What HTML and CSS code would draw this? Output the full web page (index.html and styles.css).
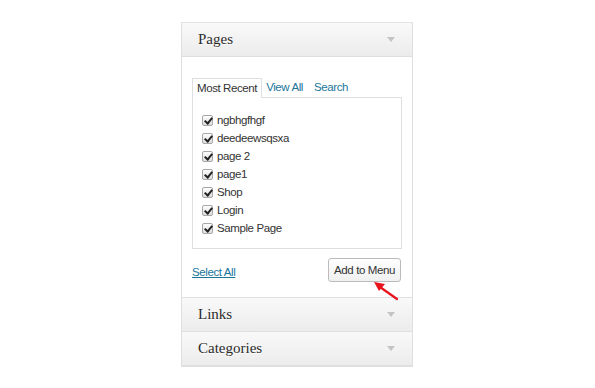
FILE: index.html
```html
<!DOCTYPE html>
<html lang="en">
<head>
    <meta charset="UTF-8">
    <title>Menu Pages</title>
    <link rel="stylesheet" href="styles.css">
</head>
<body>
    <div class="panel">
        <div class="section-head">
            <h3>Pages</h3>
            <span class="toggle"></span>
        </div>
        <div class="section-body">
            <ul class="tabs">
                <li class="tab active">Most Recent</li>
                <li class="tab">View All</li>
                <li class="tab">Search</li>
            </ul>
            <ul class="page-list">
                <li><span class="check"></span>ngbhgfhgf</li>
                <li><span class="check"></span>deedeewsqsxa</li>
                <li><span class="check"></span>page 2</li>
                <li><span class="check"></span>page1</li>
                <li><span class="check"></span>Shop</li>
                <li><span class="check"></span>Login</li>
                <li><span class="check"></span>Sample Page</li>
            </ul>
            <div class="actions">
                <a href="#" class="select-all">Select All</a>
                <button class="add-btn">Add to Menu</button>
                <!-- red pointer arrow -->
                <svg class="pointer" width="30" height="22" viewBox="0 0 30 22">
                    <line x1="25" y1="19" x2="8" y2="7" stroke="#e8141c" stroke-width="2.2" stroke-linecap="round"/>
                    <polygon points="2,2 13,4 7,11" fill="#e8141c"/>
                </svg>
            </div>
        </div>
        <div class="section-head">
            <h3>Links</h3>
            <span class="toggle"></span>
        </div>
        <div class="section-head">
            <h3>Categories</h3>
            <span class="toggle"></span>
        </div>
    </div>
</body>
</html>
```

FILE: styles.css
```css
body {
    margin: 0;
    background: #fff;
    font-family: "Liberation Sans", Arial, sans-serif;
    font-size: 11.5px;
    letter-spacing: -0.4px;
    color: #333;
}
.panel {
    width: 232px;
    margin: 22px 0 0 181px;
    border: 1px solid #dfdfdf;
    border-top: 1px solid #e4e4e4;
    box-sizing: border-box;
}
.section-head {
    height: 33px;
    display: flex;
    align-items: center;
    justify-content: space-between;
    padding: 0 17px 0 16px;
    background: linear-gradient(to bottom, #f9f9f9, #ececec);
    border-bottom: 1px solid #dfdfdf;
}
.section-head h3 {
    margin: 0;
    font-family: "Liberation Serif", "Times New Roman", serif;
    font-weight: normal;
    font-size: 15px;
    letter-spacing: 0;
    color: #2a2a2a;
    text-shadow: 0 1px 0 #fff;
}
.toggle {
    width: 0;
    height: 0;
    border-left: 4px solid transparent;
    border-right: 4px solid transparent;
    border-top: 5px solid #c4c4c4;
}
.section-body {
    background: #fff;
    padding: 21px 10px 15px 10px;
    border-bottom: 1px solid #dfdfdf;
}
.tabs {
    list-style: none;
    margin: 0;
    padding: 0;
    display: flex;
    height: 20px;
}
.tab {
    padding: 0 4px;
    line-height: 19px;
    color: #21759b;
}
.tab.active {
    color: #333;
    border: 1px solid #dfdfdf;
    border-bottom: none;
    background: #fff;
    position: relative;
    z-index: 1;
    height: 20px;
    box-sizing: border-box;
    padding: 0 4px;
}
.tab:nth-child(3) {
    margin-left: 3px;
}
.page-list {
    list-style: none;
    margin: -1px 0 0 0;
    padding: 13px 9px 11px 9px;
    border: 1px solid #dfdfdf;
}
.page-list li {
    display: flex;
    align-items: center;
    line-height: 18px;
    height: 18px;
}
.check {
    width: 9px;
    height: 9px;
    border: 1px solid #a8a8a8;
    border-radius: 2px;
    background: linear-gradient(to bottom, #fdfdfd, #dedede);
    margin-right: 4px;
    position: relative;
}
.check::after {
    content: "";
    position: absolute;
    left: 3px;
    top: 0px;
    width: 3px;
    height: 6px;
    border-right: 2px solid #222;
    border-bottom: 2px solid #222;
    transform: rotate(40deg);
}
.actions {
    display: flex;
    justify-content: space-between;
    align-items: flex-end;
    margin-top: 9px;
    position: relative;
}
.select-all {
    color: #21759b;
    text-decoration: underline;
    margin-bottom: 4px;
}
.add-btn {
    height: 24px;
    width: 73px;
    padding: 0;
    margin-right: 1px;
    font-family: "Liberation Sans", Arial, sans-serif;
    font-size: 11.5px;
    letter-spacing: -0.4px;
    color: #333;
    border: 1px solid #bbb;
    border-radius: 3px;
    background: linear-gradient(to bottom, #fefefe, #f0f0f0);
}
.pointer {
    position: absolute;
    right: 0;
    top: 22px;
}
```
